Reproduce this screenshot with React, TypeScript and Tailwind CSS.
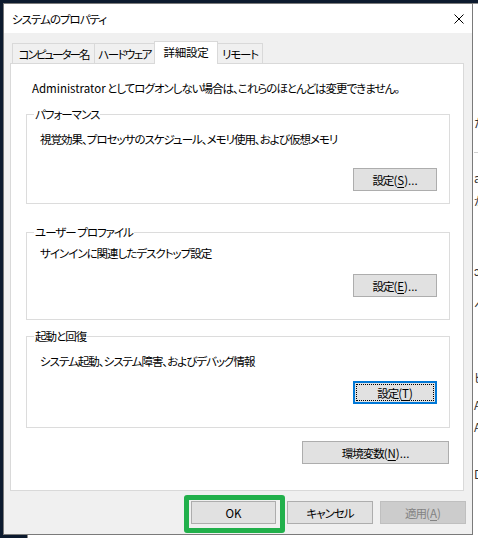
import type { ReactNode } from 'react';
import { clsx, type ClassValue } from 'clsx';
import { twMerge } from 'tailwind-merge';

function cn(...inputs: ClassValue[]) {
  return twMerge(clsx(inputs));
}

type Tab = { label: string; width: string; active?: boolean };

const tabs: Tab[] = [
  { label: 'コンピューター名', width: 'w-[83px] tracking-[-2px]' },
  { label: 'ハードウェア', width: 'w-[61px] tracking-[-1.6px]' },
  { label: '詳細設定', width: 'w-[64px] tracking-[-0.2px]', active: true },
  { label: 'リモート', width: 'w-[46px] tracking-[-1.2px]' },
];

function Key({ children }: { children: ReactNode }) {
  return <span className="underline underline-offset-[2px]">{children}</span>;
}

function Latin({ children }: { children: ReactNode }) {
  return <span className="tracking-normal">{children}</span>;
}

function Button({
  children,
  className,
  focused,
  disabled,
}: {
  children: ReactNode;
  className?: string;
  focused?: boolean;
  disabled?: boolean;
}) {
  return (
    <div
      className={cn(
        'relative flex h-[23px] shrink-0 items-center justify-center whitespace-nowrap border leading-[16px]',
        disabled
          ? 'border-[#bfbfbf] bg-[#cccccc] text-[#838383]'
          : 'border-[#adadad] bg-[#e1e1e1] text-black',
        focused && 'border-2 border-[#0078d7]',
        className,
      )}
    >
      {focused && <span className="absolute inset-[1px] border border-dotted border-black" />}
      <span className="relative">{children}</span>
    </div>
  );
}

function Group({
  title,
  text,
  className,
  textGap,
  buttonGap,
  button,
}: {
  title: string;
  text: string;
  className: string;
  textGap: string;
  buttonGap: string;
  button: ReactNode;
}) {
  return (
    <fieldset className={cn('ml-[15px] w-[424px] border border-[#dcdcdc]', className)}>
      <legend className="ml-[7px] px-[1px] leading-[16px]">{title}</legend>
      <div className="flex flex-col">
        <p className={cn('ml-[13px] whitespace-nowrap leading-[16px]', textGap)}>{text}</p>
        <div className={cn('mr-[12px] self-end', buttonGap)}>{button}</div>
      </div>
    </fieldset>
  );
}

function CloseIcon() {
  return (
    <svg width="10" height="10" viewBox="0 0 10 10" className="mr-[8px]">
      <path d="M0.5 0.5 L9.5 9.5 M9.5 0.5 L0.5 9.5" stroke="#000" strokeWidth="1" fill="none" />
    </svg>
  );
}

// window sitting behind the dialog, only its left column peeks out on the right
function BackWindow() {
  const rows = [
    { t: 'た', mt: 'mt-[111px]' },
    { t: 'a', mt: 'mt-[39px]' },
    { t: 'か', mt: 'mt-[7px]' },
    { t: 'ɔ', mt: 'mt-[54px]' },
    { t: 'ヘ', mt: 'mt-[18px]' },
    { t: 'ヒ', mt: 'mt-[57px]' },
    { t: 'A', mt: 'mt-[11px]' },
    { t: 'A', mt: 'mt-[6px]' },
    { t: 'D', mt: 'mt-[31px]' },
  ];
  return (
    <div className="absolute left-[27px] top-[3px] h-[600px] w-[520px] border border-[#8c8c8c] bg-white">
      <div className="flex flex-col pl-[446px] text-[12px] leading-[16px] text-[#333]">
        {rows.map((r, i) => (
          <span key={i} className={r.mt}>
            {r.t}
          </span>
        ))}
      </div>
      <div className="absolute left-[446px] top-[148px] h-px w-[60px] bg-[#d0d0d0]" />
    </div>
  );
}

export default function App() {
  return (
    <div className="relative h-[538px] w-[478px] overflow-hidden bg-[#0c1a2e] font-['Noto_Sans_CJK_JP',sans-serif] text-[11.5px] tracking-[-1px] text-black [font-feature-settings:'palt']">
      <BackWindow />

      <div className="absolute left-[3px] top-[3px] flex h-[532px] w-[470px] flex-col border border-[#7a7a7a] bg-[#f0f0f0]">
        {/* title bar */}
        <div className="flex h-[29px] shrink-0 items-center justify-between bg-white pl-[8px]">
          <span className="leading-[16px]">システムのプロパティ</span>
          <CloseIcon />
        </div>

        <div className="flex flex-1 flex-col pl-[6px]">
          {/* tabs */}
          <div className="ml-[2px] mt-[8px] flex h-[22px] items-end">
            {tabs.map((tab) => (
              <div
                key={tab.label}
                className={cn(
                  '-ml-px flex items-center justify-center overflow-hidden whitespace-nowrap border border-b-0 border-[#d9d9d9] leading-[16px] first:ml-0',
                  tab.width,
                  tab.active
                    ? 'relative z-10 -mb-px h-[23px] bg-white pb-[2px]'
                    : 'h-[20px] bg-[#f0f0f0]',
                )}
              >
                {tab.label}
              </div>
            ))}
          </div>

          {/* tab page */}
          <div className="flex h-[428px] w-[454px] flex-col border border-[#d9d9d9] bg-white">
            <p className="ml-[21px] mt-[16px] whitespace-nowrap leading-[16px]">
              <Latin>Administrator</Latin> としてログオンしない場合は、これらのほとんどは変更できません。
            </p>

            <Group
              title="パフォーマンス"
              text="視覚効果、プロセッサのスケジュール、メモリ使用、および仮想メモリ"
              className="mt-[10px] h-[98px]"
              textGap="mt-[9px]"
              buttonGap="mt-[21px]"
              button={
                <Button className="w-[84px]">
                  設定<Latin>(<Key>S</Key>)...</Latin>
                </Button>
              }
            />

            <Group
              title="ユーザー プロファイル"
              text="サインインに関連したデスクトップ設定"
              className="mt-[20px] h-[96px]"
              textGap="mt-[5px]"
              buttonGap="mt-[13px]"
              button={
                <Button className="w-[84px]">
                  設定<Latin>(<Key>E</Key>)...</Latin>
                </Button>
              }
            />

            <Group
              title="起動と回復"
              text="システム起動、システム障害、およびデバッグ情報"
              className="mt-[8px] h-[100px]"
              textGap="mt-[9px]"
              buttonGap="mt-[12px]"
              button={
                <Button focused className="w-[84px]">
                  設定<Latin>(<Key>T</Key>)</Latin>
                </Button>
              }
            />

            <Button className="ml-[291px] mt-[13px] w-[147px]">
              環境変数<Latin>(<Key>N</Key>)...</Latin>
            </Button>
          </div>

          {/* dialog buttons */}
          <div className="mt-[10px] flex">
            <Button className="ml-[181px] w-[85px]">
              <Latin>OK</Latin>
            </Button>
            <Button className="ml-[11px] w-[86px]">キャンセル</Button>
            <Button disabled className="ml-[7px] w-[86px]">
              適用<Latin>(<Key>A</Key>)</Latin>
            </Button>
          </div>
        </div>
      </div>

      {/* highlight around OK */}
      <div className="absolute left-[184px] top-[495px] h-[38px] w-[101px] rounded-[3px] border-[5px] border-[#21b04b]" />
    </div>
  );
}
